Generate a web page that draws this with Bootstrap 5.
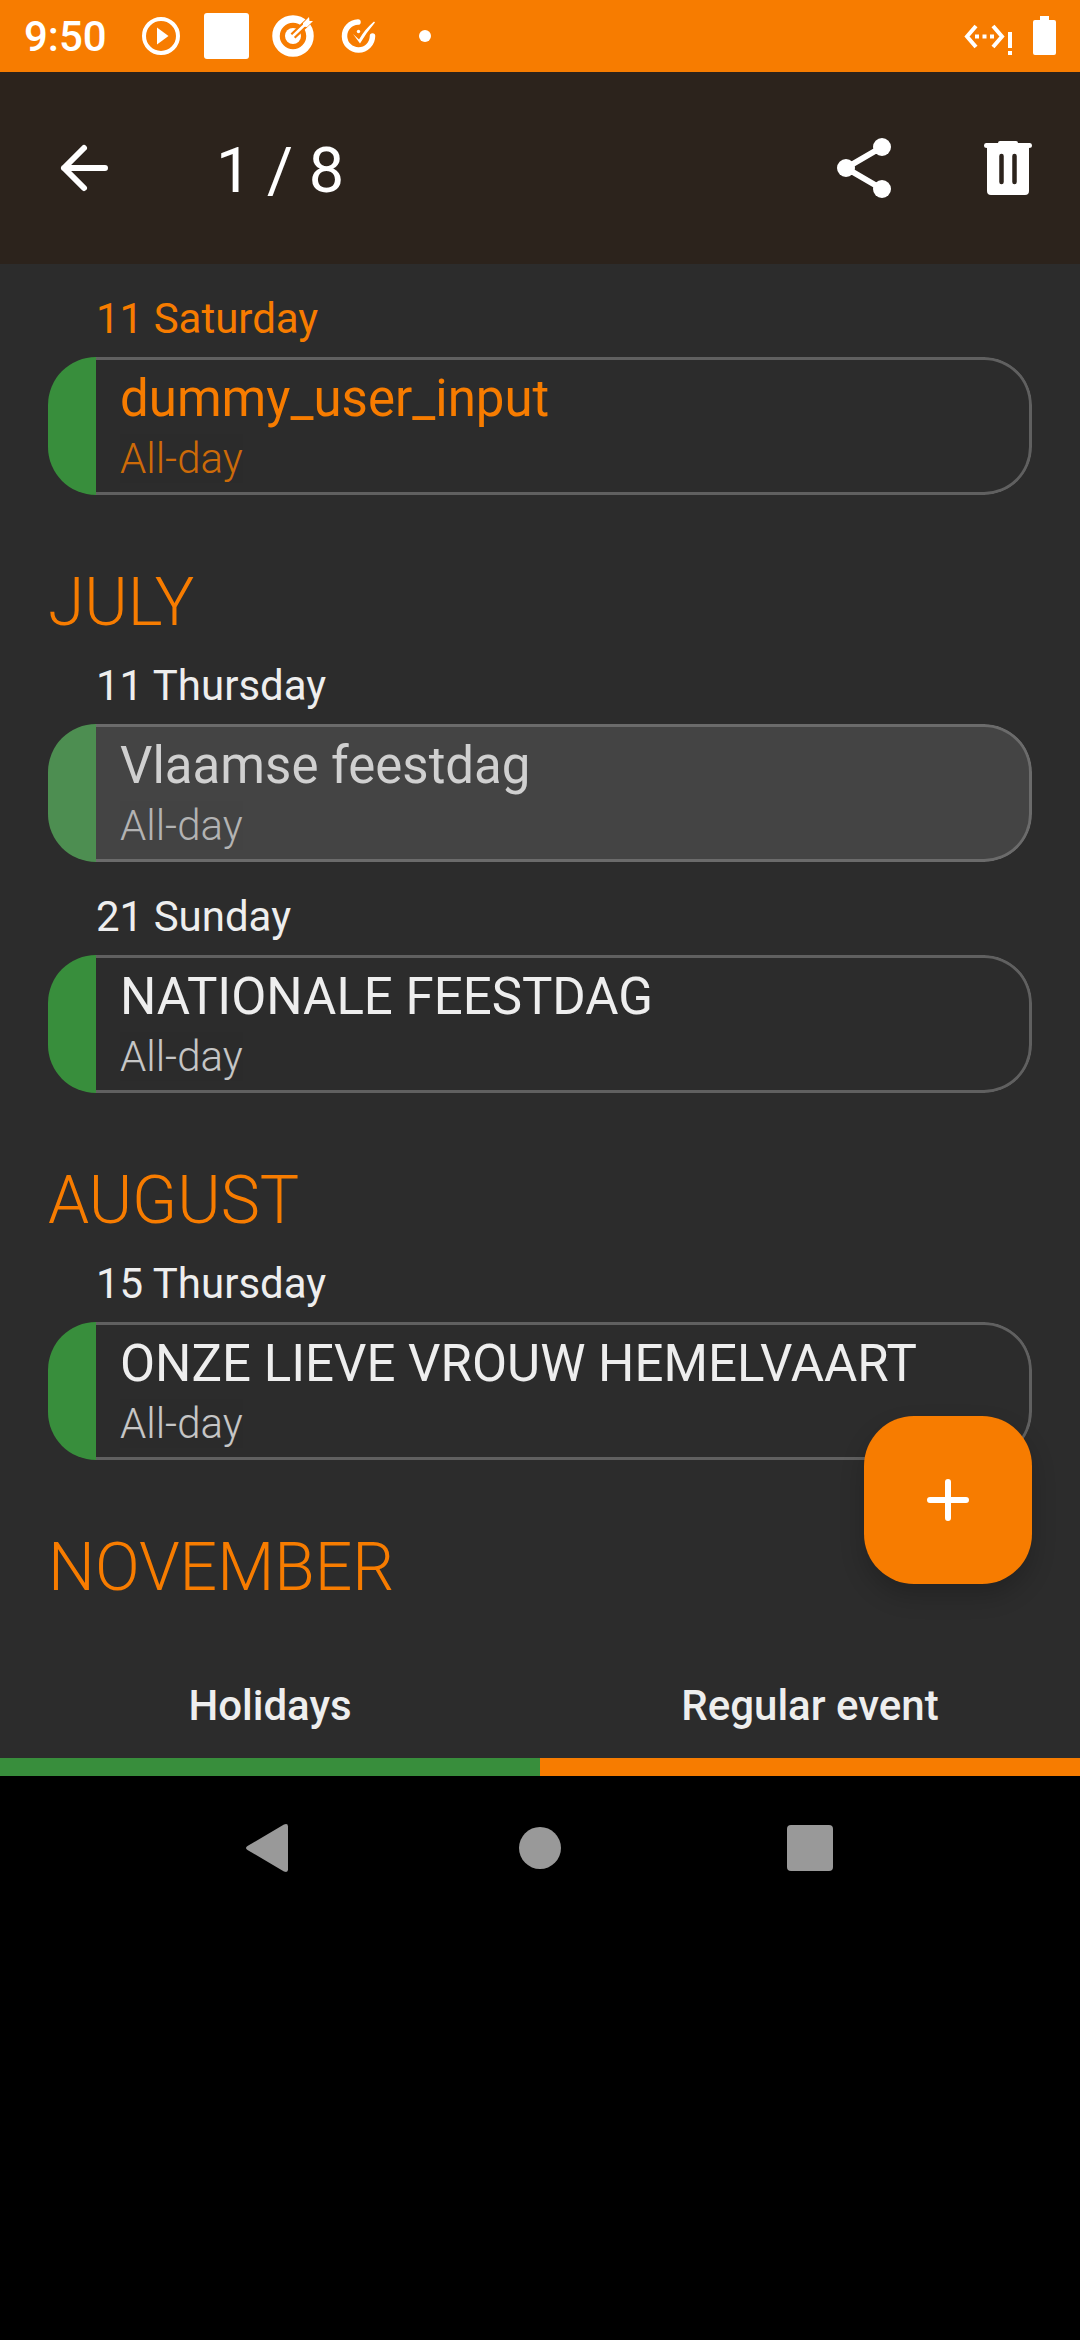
<!DOCTYPE html>
<html lang="en">
<head>
<meta charset="utf-8">
<meta name="viewport" content="width=device-width, initial-scale=1">
<title>Calendar events</title>
<link href="https://cdn.jsdelivr.net/npm/bootstrap@5.3.0/dist/css/bootstrap.min.css" rel="stylesheet">
<style>
  :root { --accent: #f77c00; --holiday: #388e3c; --surface: #2c2c2c; --ink: #eeeeee; }
  body { background: #000; color: var(--ink); font-family: Roboto, "Liberation Sans", sans-serif; font-size: 42px; line-height: 50px; }
  svg { display: block; flex: none; }
  .status-bar { background: var(--accent); color: #fff; height: 72px; padding: 0 24px; }
  .clock { width: 104px; font-weight: 500; padding-top: 2px; }
  .app-header { background: #2c231c; color: #fff; height: 192px; padding: 0 48px; gap: 72px; }
  .app-title { font-size: 63px; line-height: 72px; font-weight: 400; padding: 6px 0 0 24px; }
  .icon-btn { background: none; border: 0; padding: 0; color: inherit; }
  .surface { background: var(--surface); }
  .agenda { padding: 0 48px 56px; }
  .month { font-size: 66px; line-height: 56px; font-weight: 300; color: var(--accent); padding-top: 80px; }
  .day { font-size: 42px; line-height: 50px; font-weight: 400; padding: 30px 0 13px 48px; }
  .event { border-radius: 48px; overflow: hidden; }
  .event-stripe { width: 48px; background: var(--holiday); }
  .event-body { border: 3px solid #606060; border-left: 0; border-radius: 0 48px 48px 0; padding: 9px 24px 3px; }
  .event-name { font-size: 51px; line-height: 60px; }
  .event-time { line-height: 60px; font-weight: 300; opacity: .8; }
  .today { color: var(--accent); }
  .picked { color: #d0d0d0; }
  .picked .event-stripe { background: #4d8e51; }
  .picked .event-body { background: #444444; border-color: #6b6b6b; }
  .fab { right: 48px; bottom: 192px; width: 168px; height: 168px; border: 0; border-radius: 50px; background: var(--accent); color: #fff; box-shadow: 0 12px 24px rgba(0,0,0,.2); }
  .legend a { color: var(--ink); font-weight: 500; padding: 29px 0 27px; border-bottom: 18px solid var(--accent); }
  .legend .legend-holiday { border-color: var(--holiday); }
  .system-nav { width: 75%; height: 144px; color: #999; }
</style>
</head>
<body>
<div class="status-bar d-flex align-items-center">
  <div class="clock">9:50</div>
  <svg width="66" height="72" viewBox="-33 -36 66 72"><circle r="17" fill="none" stroke="#fff" stroke-width="4"/><path d="M-4-8.500 7.500 0-4 8.500z" fill="#fff"/></svg>
  <svg width="66" height="72" viewBox="-33 -36 66 72"><rect x="-23" y="-23" width="45" height="46" rx="3" fill="#fff"/></svg>
  <svg width="66" height="72" viewBox="-33 -36 66 72"><circle r="17" fill="none" stroke="#fff" stroke-width="7.500"/><circle r="8" fill="#fff"/><path d="M0 0 18-17" stroke="#f77c00" stroke-width="7"/><path d="M0 0 12-11.500" stroke="#fff" stroke-width="2.500" stroke-linecap="round"/><path d="M10-13 16-19 16.500-15 20-15 14-9 10-9.500z" fill="#fff"/></svg>
  <svg width="66" height="72" viewBox="-33 -36 66 72"><path d="M-1-14A14 14 0 1 0 13.500 0" fill="none" stroke="#fff" stroke-width="5.500" stroke-linecap="round"/><path d="M-6-2 0 3.500Q6-7 15-14.500L16-13.500Q7-3 1 7.500z" fill="#fff"/><circle cx="-.5" cy="-4.500" r="1.700" fill="#fff"/></svg>
  <svg width="66" height="72" viewBox="-33 -36 66 72"><circle r="6" fill="#fff"/></svg>
  <svg class="ms-auto" width="50" height="72" viewBox="963 0 50 72"><path d="M976 26 967 36.500 976 47M993 26 1002 36.500 993 47" fill="none" stroke="#fff" stroke-width="4"/><path d="M975 34.500h4v4h-4zM982.500 34.500h4v4h-4zM990 34.500h4v4h-4zM1008 32h4v16h-4zM1008 51h4v4h-4z" fill="#fff"/></svg>
  <svg class="ms-3" width="27" height="72" viewBox="1029 0 27 72"><path d="M1040 20v-4h9v4h5q2 0 2 2v31q0 2-2 2h-19q-2 0-2-2V22q0-2 2-2z" fill="#fff"/></svg>
</div>

<div class="surface position-relative">
  <header class="app-header d-flex align-items-center">
    <button class="icon-btn" type="button" aria-label="Back">
      <svg width="72" height="72" viewBox="48 132 72 72"><path d="M84 148 64 168 84 188M64 168H105" fill="none" stroke="#fff" stroke-width="6" stroke-linecap="round" stroke-linejoin="round"/></svg>
    </button>
    <h1 class="app-title mb-0 me-auto">1 / 8</h1>
    <button class="icon-btn" type="button" aria-label="Share">
      <svg width="72" height="72" viewBox="828 132 72 72" fill="#fff"><path d="M882 147 846 168 882 189" fill="none" stroke="#fff" stroke-width="6"/><circle cx="846" cy="168" r="9"/><circle cx="882" cy="147" r="9"/><circle cx="882" cy="189" r="9"/></svg>
    </button>
    <button class="icon-btn" type="button" aria-label="Delete">
      <svg width="60" height="72" viewBox="972 132 60 72"><path d="M998 143q0-2 2-2h16q2 0 2 2h12q2 0 2 2.500t-3 2.500v43q0 4-4 4h-34q-4 0-4-4v-43q-3 0-3-2.500t2-2.500z" fill="#fff"/><path d="M1001.500 156v26M1014.500 156v26" stroke="#2c231c" stroke-width="4.500" stroke-linecap="round"/></svg>
    </button>
  </header>

  <main class="agenda">
    <h3 class="day today mb-0">11 Saturday</h3>
    <article class="event today d-flex">
      <div class="event-stripe"></div>
      <div class="event-body flex-grow-1"><div class="event-name">dummy_user_input</div><div class="event-time">All-day</div></div>
    </article>

    <h2 class="month mb-0">JULY</h2>
    <h3 class="day mb-0">11 Thursday</h3>
    <article class="event picked d-flex">
      <div class="event-stripe"></div>
      <div class="event-body flex-grow-1"><div class="event-name">Vlaamse feestdag</div><div class="event-time">All-day</div></div>
    </article>
    <h3 class="day mb-0">21 Sunday</h3>
    <article class="event d-flex">
      <div class="event-stripe"></div>
      <div class="event-body flex-grow-1"><div class="event-name">NATIONALE FEESTDAG</div><div class="event-time">All-day</div></div>
    </article>

    <h2 class="month mb-0">AUGUST</h2>
    <h3 class="day mb-0">15 Thursday</h3>
    <article class="event d-flex">
      <div class="event-stripe"></div>
      <div class="event-body flex-grow-1"><div class="event-name">ONZE LIEVE VROUW HEMELVAART</div><div class="event-time">All-day</div></div>
    </article>

    <h2 class="month mb-0">NOVEMBER</h2>
  </main>

  <nav class="legend d-flex text-center" aria-label="Event types">
    <a class="legend-holiday w-50 text-decoration-none" href="#">Holidays</a>
    <a class="w-50 text-decoration-none" href="#">Regular event</a>
  </nav>

  <button class="fab position-absolute d-flex align-items-center justify-content-center p-0" type="button" aria-label="Add event">
    <svg width="72" height="72" viewBox="-36 -36 72 72"><path d="M-18 0H18M0-18V18" stroke="#fff" stroke-width="6" stroke-linecap="round"/></svg>
  </button>
</div>

<nav class="system-nav mx-auto d-flex align-items-center" aria-label="System">
  <button class="icon-btn flex-fill d-flex justify-content-center" type="button" aria-label="Back">
    <svg width="72" height="72" viewBox="-36 -36 72 72"><path d="M-22.500-2 14-23.500q4-1.500 4 2v43q0 3.500-4 2L-22.500 2q-3-2 0-4z" fill="currentColor"/></svg>
  </button>
  <button class="icon-btn flex-fill d-flex justify-content-center" type="button" aria-label="Home">
    <svg width="72" height="72" viewBox="-36 -36 72 72"><circle r="21" fill="currentColor"/></svg>
  </button>
  <button class="icon-btn flex-fill d-flex justify-content-center" type="button" aria-label="Recent apps">
    <svg width="72" height="72" viewBox="-36 -36 72 72"><rect x="-23" y="-23" width="46" height="46" rx="4" fill="currentColor"/></svg>
  </button>
</nav>
<script src="https://cdn.jsdelivr.net/npm/bootstrap@5.3.0/dist/js/bootstrap.bundle.min.js"></script>
</body>
</html>
